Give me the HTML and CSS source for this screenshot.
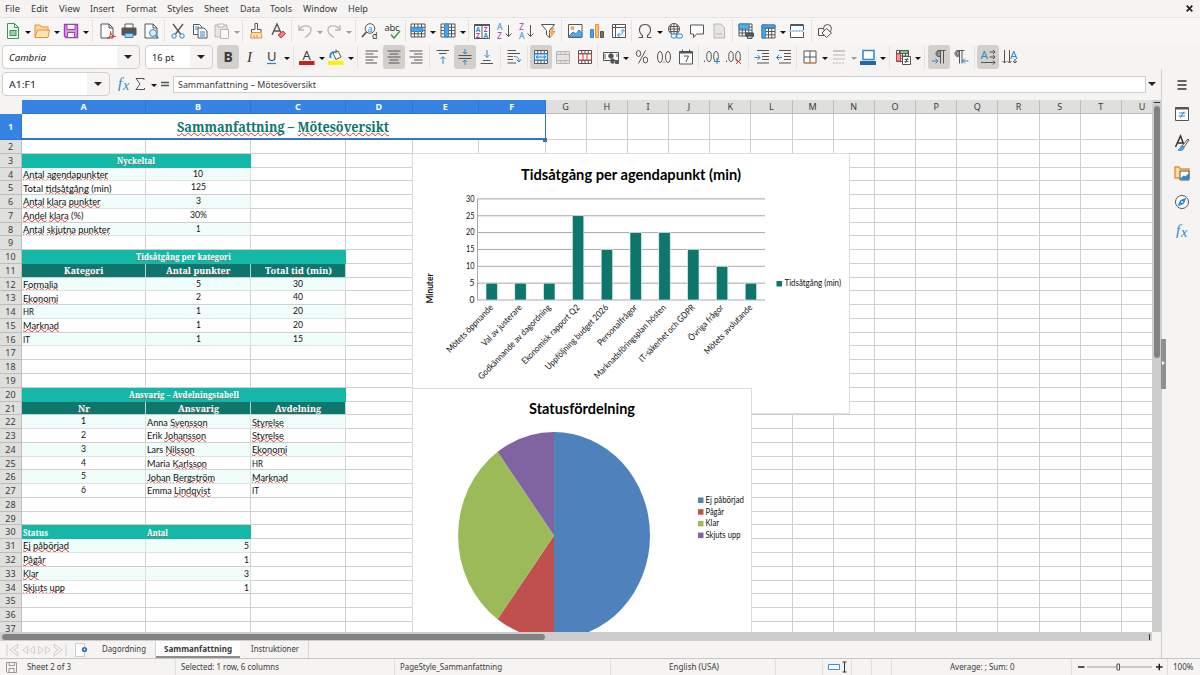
FILE: index.html
```html
<!DOCTYPE html>
<html lang="en" dir="ltr">
  <head>
    <meta charset="utf-8">
    <title>Sammanfattning – Mötesöversikt</title>
    <link rel="stylesheet" href="styles.css">
  </head>
  <body>
    <div id="menubar">
      <ul class="menu">
        <li data-w="15">File</li>
        <li data-w="17">Edit</li>
        <li data-w="21">View</li>
        <li data-w="24.5">Insert</li>
        <li data-w="30.5">Format</li>
        <li data-w="26.5">Styles</li>
        <li data-w="24.5">Sheet</li>
        <li data-w="20">Data</li>
        <li data-w="22">Tools</li>
        <li data-w="34">Window</li>
        <li data-w="20">Help</li>
      </ul>
      <svg class="close" viewBox="0 0 8 8"><path d="M1.5 1.5l5 5M6.5 1.5l-5 5"/></svg>
    </div>

    <div class="toolbar" id="standard"></div>

    <div class="toolbar" id="formatting">
      <div class="combo font"><span class="italic" data-w="37">Cambria</span><i class="arrow"></i></div>
      <div class="combo size"><span data-w="22">16 pt</span><i class="arrow"></i></div>
    </div>

    <div id="main">
      <div id="work">
        <div id="formula">
          <div class="combo name"><span data-w="27">A1:F1</span><i class="arrow"></i></div>
          <div class="fx" id="fxTools"></div>
          <div class="input"><span data-w="138">Sammanfattning – Mötesöversikt</span></div>
          <i class="arrow"></i>
        </div>
        <div id="view">
          <div id="sheet">
            <div id="cells"></div>
            <i class="handle"></i>
            <svg class="chart bars" viewBox="412 153 438 261">
              <text class="title" x="521" y="180" textLength="220" lengthAdjust="spacingAndGlyphs">Tidsåtgång per agendapunkt (min)</text>
              <g id="barPlot"></g>
              <text class="axis" transform="translate(432.5 303.5) rotate(-90)" textLength="30" lengthAdjust="spacingAndGlyphs">Minuter</text>
              <rect x="776.5" y="281" width="5.5" height="5.5" fill="#0f766e"/>
              <text x="784.5" y="286.2" textLength="56.5" lengthAdjust="spacingAndGlyphs">Tidsåtgång (min)</text>
            </svg>
            <svg class="chart pie" viewBox="412 388 340 260">
              <text class="title" x="529" y="414" textLength="106" lengthAdjust="spacingAndGlyphs">Statusfördelning</text>
              <path fill="#4f81bd" d="M554 535.5V432a96 103.5 0 0 1 0 207z"/>
              <path fill="#c0504d" d="M554 535.5V639a96 103.5 0 0 1-56.4-19.8z"/>
              <path fill="#9bbb59" d="M554 535.5L497.6 619.2a96 103.5 0 0 1 0-167.4z"/>
              <path fill="#8064a2" d="M554 535.5L497.6 451.8A96 103.5 0 0 1 554 432z"/>
              <g id="pieLegend"></g>
            </svg>
          </div>
          <div class="vscroll"><i></i></div>
        </div>
        <div class="hscroll"><i></i><b></b></div>
        <div id="tabs">
          <svg class="nav" viewBox="0 0 62 14">
            <path d="M1 1v12M12 1L4 7l8 6v-3.500L8 7l4-2.500zM22 3l-5 4 5 4zM29 3l-5 4 5 4zM33 3l5 4-5 4zM40 3l5 4-5 4zM49 1l8 6-8 6V9.500L53 7l-4-2.500zM61 1v12"/>
          </svg>
          <svg class="add" viewBox="0 0 16 16">
            <path d="M1.500 1.500h9v13h-9z" fill="#fff" stroke="#ccc"/>
            <circle cx="10.500" cy="7.500" r="2.600" fill="#2a6ab8"/><circle cx="10.500" cy="7.500" r=".900" fill="#fff"/>
          </svg>
          <ul class="tab">
            <li><span data-w="44">Dagordning</span></li>
            <li class="active"><span data-w="68">Sammanfattning</span></li>
            <li><span data-w="48">Instruktioner</span></li>
          </ul>
        </div>
      </div>
      <div id="sidebar"><i class="grip"></i></div>
    </div>

    <div id="status">
      <div class="s-save" id="saveState"></div>
      <div class="s-sheet"><span data-w="44">Sheet 2 of 3</span></div>
      <div class="s-sel"><span data-w="98">Selected: 1 row, 6 columns</span></div>
      <div class="s-style"><span data-w="102">PageStyle_Sammanfattning</span></div>
      <div class="s-lang"><span data-w="50">English (USA)</span></div>
      <div class="s-gap"></div>
      <div class="s-mode">
        <svg viewBox="0 0 24 14"><path d="M1.500 4.500h11v5h-11z" fill="#fff" stroke="#3c8fd0"/><path d="M15.500 2h4M15.500 12h4M17.500 2v10" stroke="#333" fill="none"/></svg>
      </div>
      <div class="s-a"></div>
      <div class="s-b"></div>
      <div class="s-sum"><span data-w="64.5">Average: ; Sum: 0</span></div>
      <div class="s-zoom">
        <svg viewBox="0 0 90 14"><path d="M2 7h6.500M80 7h6.500M83.250 3.800v6.400" stroke="#222" stroke-width="1.500"/><path d="M11 7h65" stroke="#999"/><path d="M41 4h2.500v6H41z" fill="#f5f4f2" stroke="#555"/></svg>
      </div>
      <div class="s-pct"><span data-w="20.5">100%</span></div>
    </div>

    <script src="script.js"></script>
  </body>
</html>
```
FILE: styles.css
```css
html,body,div,ul{
  margin:0;
  padding:0;
}
body{
  display:flex;
  flex-direction:column;
  width:1200px;
  height:675px;
  overflow:hidden;
  font-family:"Noto Sans","Open Sans",sans-serif;
  font-size:9px;
  color:#3a3a3a;
  background-color:#f5f4f2;
}
ul{
  list-style:none;
}
*{
  box-sizing:border-box;
}
svg{
  display:block;
  flex:none;
}
[data-w]{
  white-space:pre;
}
.fit{
  display:inline-block;
  transform-origin:0 50%;
  white-space:pre;
}

/* menu bar */
#menubar{
  display:flex;
  align-items:center;
  justify-content:space-between;
  flex:none;
  height:17px;
  padding:0 6px 0 5px;
}
.menu{
  display:flex;
  gap:10.800px;
  line-height:17px;
}
.close{
  width:9px;
  height:9px;
  stroke:#222;
  stroke-width:1.6;
}

/* toolbars */
.toolbar{
  display:flex;
  align-items:center;
  flex:none;
  height:27px;
  padding-left:1.500px;
}
#standard{
  border-top:1px solid #e6e5e3;
  background-color:#f7f6f5;
}
#formatting{
  height:26px;
  padding-left:2px;
}
.tool{
  display:flex;
  align-items:center;
  flex:none;
}
.tool svg{
  width:22px;
  height:22px;
  fill:none;
  stroke:#555;
  stroke-width:1;
}
.tool.drop{
  width:29.400px;
}
.tool.on svg{
  height:24px;
  border-radius:3px;
  background-color:#d3cfcb;
}
.tool.off{
  opacity:.38;
}
.tool text{
  stroke:none;
  fill:#3a3a3a;
  font-size:14px;
}
.sep{
  flex:none;
  display:flex;
  justify-content:center;
  height:22px;
}
.sep::before{
  content:"";
  width:1px;
  background-color:#e3e2e0;
}
.arrow{
  flex:none;
  width:0;
  height:0;
  border:4px solid transparent;
  border-top:4.500px solid #222;
  border-bottom:0;
}
.tool .arrow{
  margin:2px 0 0 1px;
  border-width:3px;
  border-top:3px solid #111;
  border-bottom:0;
}
.combo{
  display:flex;
  align-items:center;
  flex:none;
  height:24px;
  padding-left:6px;
  border:1px solid #d2cfcb;
  border-radius:4px;
  background:linear-gradient(90deg,#fff,#fff) no-repeat;
  color:#222;
  font-size:9.500px;
}
.combo span{
  flex:1;
}
.combo .arrow{
  margin-right:7px;
}
.combo.font{
  width:138px;
  margin-right:5px;
  background-size:114px 100%;
}
.combo.size{
  width:68px;
  margin-right:4px;
  background-size:44px 100%;
}
.combo.name{
  width:108px;
  background-size:84px 100%;
}
.italic{
  font-style:italic;
}

/* formula bar */
#main{
  display:flex;
  flex:1;
  min-height:0;
}
#work{
  display:flex;
  flex-direction:column;
  width:1161px;
}
#formula{
  display:flex;
  align-items:center;
  flex:none;
  height:30px;
  padding:0 0 2px 2px;
}
.fx{
  display:flex;
  width:63px;
  height:22px;
  padding-left:6px;
}
.fx .tool{
  width:16px;
}
.fx .tool.drop{
  width:25px;
}
.fx .tool svg{
  margin:0 -3px;
}
.fx .tool .arrow{
  margin-left:3px;
}
.input{
  width:973px;
  height:17px;
  margin-right:2px;
  padding-left:4px;
  border:1px solid #cfcdca;
  background-color:#fff;
  line-height:15px;
}

/* sheet */
#view{
  display:flex;
  flex:1;
  min-height:0;
}
#sheet{
  position:relative;
  width:1152px;
  overflow:hidden;
  background-color:#fff;
}
#cells{
  display:grid;
  grid-template-columns:22px 124px 105px 95px 66.500px 66.500px 66.500px repeat(15,41.180px);
  grid-template-rows:14px 26px repeat(35,13.770px);
}
.head{
  border-right:1px solid #bdbdbb;
  border-bottom:1px solid #bdbdbb;
  background-color:#dfdfde;
  font-size:9px;
  line-height:14.500px;
  text-align:center;
  overflow:hidden;
}
.head.sel{
  border-color:#2f76cc;
  background-color:#3584e4;
  color:#fff;
  font-weight:bold;
}
.head.corner{
  border-color:#f5f4f2;
  background-color:#f5f4f2;
}
.row1{
  line-height:26px;
}
.cell{
  display:flex;
  align-items:flex-end;
  min-width:0;
  border-right:1px solid #cfcfcf;
  border-bottom:1px solid #cfcfcf;
  padding:0 1px 0 .600px;
  overflow:hidden;
  font-family:Lato,sans-serif;
  font-size:9.600px;
  line-height:10.500px;
  color:#111;
}
.cell.center{
  justify-content:center;
  padding:0;
}
.cell.num{
  align-items:flex-start;
  line-height:12.500px;
}
.cell.right{
  justify-content:flex-end;
}
.cell.light{
  border-color:#d9e5e3;
  background-color:#f0fdfa;
}
.cell.teal,.cell.dark{
  font-family:"Noto Serif","DejaVu Serif Condensed","DejaVu Serif",serif;
  font-size:9.300px;
  font-weight:bold;
  line-height:11.500px;
  color:#fff;
}
.cell.teal{
  border-color:#14b8a6;
  background-color:#14b8a6;
}
.cell.dark{
  border-color:#b9d6d3;
  background-color:#0f766e;
}
.cell.big{
  align-items:center;
  border:0;
  border-right:1px solid #3476c4;
  border-bottom:2px solid #3476c4;
  font-family:"Noto Serif","DejaVu Serif Condensed","DejaVu Serif",serif;
  font-size:14px;
  font-weight:bold;
  line-height:24px;
  padding-top:2px;
  color:#0f766e;
}
.cell u{
  text-decoration:underline wavy #e0332c .900px;
  text-decoration-skip-ink:none;
  text-underline-offset:-1px;
}
.cell.big u{
  text-underline-offset:0;
}
.cell.teal u,.cell.dark u{
  text-decoration-color:#e0332c;
  text-underline-offset:-2.500px;
}
.handle{
  position:absolute;
  left:543px;
  top:38px;
  width:4px;
  height:4px;
  background-color:#3476c4;
}

/* charts float over the cells */
.chart{
  position:absolute;
  left:412px;
  outline:1px solid #dcdcdc;
  outline-offset:-1px;
  background-color:#fff;
  font-family:Lato,sans-serif;
  font-size:9px;
  fill:#111;
}
.chart.bars{
  top:53px;
  width:438px;
  height:261px;
}
.chart.pie{
  top:288px;
  width:340px;
  height:260px;
}
.chart .title{
  font-size:15.500px;
  font-weight:bold;
  fill:#000;
}
.chart .axis{
  font-size:8.500px;
  font-weight:bold;
}

/* scroll bars */
.vscroll{
  width:9px;
  padding:1.500px 1.500px 0;
  background-color:#cdcdcd;
}
.vscroll::before{
  content:"";
  display:block;
  height:1px;
  background-color:#333;
}
.vscroll i{
  display:block;
  width:6px;
  height:252px;
  margin-top:3px;
  border-radius:3px;
  background-color:#808381;
}
.hscroll{
  display:flex;
  justify-content:space-between;
  align-items:center;
  flex:none;
  width:1152px;
  height:9px;
  padding:0 2px;
  background-color:#cdcdcd;
}
.hscroll i{
  width:543px;
  height:6px;
  border-radius:3px;
  background-color:#808381;
}
.hscroll b{
  width:1px;
  height:6px;
  background-color:#333;
}

/* sheet tabs */
#tabs{
  display:flex;
  flex:none;
  height:17px;
  padding-left:6px;
}
.nav{
  width:61px;
  height:14px;
  margin-top:2px;
  fill:none;
  stroke:#cfcecb;
}
.add{
  width:16px;
  height:16px;
  margin:1px 6px 0 7px;
}
.tab{
  display:flex;
  line-height:16px;
}
.tab li{
  padding:0 9.500px 0 5.800px;
  border-right:1px solid #d5d3d0;
}
.tab li.active{
  padding:0 8px;
  border-right:0;
  border-bottom:2px solid #8b8e8f;
  background-color:#fff;
  font-weight:bold;
}
.tab li:last-child{
  padding-left:10.500px;
}

/* side bar */
#sidebar{
  position:relative;
  display:flex;
  flex-direction:column;
  align-items:center;
  gap:7.200px;
  width:39px;
  padding:4px 0 0 1px;
  border-left:1px solid #cfcdca;
}
.grip{
  position:absolute;
  left:-1px;
  top:269px;
  width:5px;
  height:50px;
  background-color:#8e918f;
}
.grip::after{
  content:"";
  display:block;
  margin:22px 0 0 1px;
  border:2.500px solid transparent;
  border-left:3px solid #fff;
  border-right:0;
}

/* status bar */
#status{
  display:flex;
  flex:none;
  height:17px;
  border-top:1px solid #c9c7c4;
  font-size:8.800px;
  line-height:16px;
}
#status > div{
  border-right:1px solid #e0dfdc;
}
#status svg{
  height:14px;
  margin-top:1px;
}
#status .s-save{
  width:27px;
  padding-left:1px;
  border:0;
}
#status .s-save svg{
  height:22px;
  margin-top:-3px;
}
.s-sheet{
  width:149px;
}
.s-sel{
  width:219px;
  padding-left:5px;
}
.s-style{
  width:216px;
  padding-left:5px;
}
.s-lang{
  width:165px;
  padding-left:58px;
}
.s-gap{
  width:47px;
}
.s-mode{
  width:29px;
  padding-left:4px;
}
.s-mode svg{
  width:24px;
}
.s-a{
  width:20px;
}
.s-b{
  width:20px;
}
.s-sum{
  width:180px;
  padding-left:58px;
}
.s-zoom{
  width:96px;
  padding-left:4px;
}
.s-zoom svg{
  width:90px;
}
#status .s-pct{
  padding-left:5px;
  border:0;
}
```
FILE: script.js
```javascript
~function(){
  // icons on a 22x22 canvas
  const B = '#2f87cf', O = '#e69138', P = '#a33fb5', R = '#d33a3a', G = '#3a9a55';
  const doc = 'M5 4h8l4 4v10H5z';
  const lines = list => `<path d="${list.map(l => `M${l[0]} ${l[2]}H${l[1]}`).join('')}"/>`;
  const table = (x, y, w, h) => `<path fill="#fff" d="M${x} ${y}h${w}v${h}h-${w}zM${x} ${y+h/4}h${w}M${x} ${y+h/2}h${w}M${x} ${y+h*3/4}h${w}M${x+w/4} ${y}v${h}M${x+w/2} ${y}v${h}M${x+w*3/4} ${y}v${h}"/>`;
  const icons = {
    new: `<path d="M5.500 3.500h7l4 4v11h-11z" fill="#eefaf0" stroke="${G}"/><path d="M12.500 3.500v4h4" stroke="${G}"/><path d="M7.500 10h7v6h-7z" fill="${G}" stroke="none"/><path d="M8.500 12h5M8.500 14h5" stroke="#fff"/>`,
    open: `<path d="M4 17V5h5l2 2h6v3" fill="#fbd9a4" stroke="${O}"/><path d="M4 17.500L6.500 10h12L17 17.500z" fill="#fde3b8" stroke="${O}"/>`,
    save: `<path d="M4.500 4.500h13v13H6l-1.500-1.500z" fill="#d59be0" stroke="${P}" stroke-width="1.400"/><path d="M7 4.500h8v5H7zM7.500 12.500h7v5h-7z" fill="#fff" stroke="${P}"/>`,
    saveState: `<path d="M5.500 6.500h10v10h-9l-1-1zM8 6.500h5.500v3H8zM8 12.500h5v4H8z" stroke="#999"/>`,
    pdf: `<path d="${doc}M13 4v4h4" fill="#fff"/><path d="M11 18.500c3-1 4-4 3.500-7 0 3 2 5 5 5-3-.5-6 .5-8.500 2" stroke="${R}"/>`,
    print: `<path d="M7 8V4h8v4" fill="#fff"/><path d="M4 8h14v7H4z" fill="#555"/><path d="M7 13.500h8v4H7z" fill="#9fd0f3" stroke="${B}"/>`,
    preview: `<path d="${doc}M13 4v4h4" fill="#fff"/><circle cx="13" cy="13" r="3.500" fill="#d6ecfb" stroke="${B}"/><path d="M15.500 15.500l3 3" stroke="${B}" stroke-width="1.500"/>`,
    cut: `<path d="M6 4l7.500 10M16 4L8.500 14" stroke-width="1.300"/><circle cx="7" cy="16" r="2.200" stroke="${B}"/><circle cx="15" cy="16" r="2.200" stroke="${B}"/>`,
    copy: `<path d="M4.500 4.500h6l2 2v8h-8z" fill="#fff"/><path d="M9 8h6l3 3v7H9z" fill="#fff"/><path d="M6 7h4M6 9h3M11 12h5M11 14h5M11 16h5" stroke="${B}"/>`,
    paste: `<path d="M4 5h12v12H4z" fill="#ccc"/><path d="M7 4h6v3H7zM9.500 9.500h8v9h-8z" fill="#fff"/>`,
    clone: `<path d="M10 3.500h2.500v6H16v3H6.500v-3H10z" fill="#fff"/><path d="M6.500 12.500h9.500l1 5.500H5.500z" fill="#fde3b8" stroke="${O}"/><path d="M9 15v3M12 15v3" stroke="${O}"/>`,
    clear: `<path d="M5 15L10 4l4 9M7 11h6" stroke-width="1.400"/><path d="M11 15l5-4 2.500 2.500-4.500 4.500z" fill="#ee7d7d" stroke="${R}"/>`,
    undo: `<path d="M5 5v5h5M5.500 9.500C8 5 16 4.500 17 9c.5 3-2 6-6 8.500" stroke-width="1.300"/>`,
    redo: `<path d="M17 5v5h-5M16.500 9.500C14 5 6 4.500 5 9c-.5 3 2 6 6 8.500" stroke-width="1.300"/>`,
    find: `<circle cx="11" cy="8.500" r="4.800" fill="#fff"/><path d="M7.500 12L3 17" stroke-width="1.800"/><text x="8.500" y="11.500" style="font-size:9px;fill:${B}">a</text><text x="13" y="19" style="font-size:9px">d</text>`,
    spell: `<text x="3.500" y="10.500" textLength="15" style="font-size:9.500px">abc</text><path d="M10 14.500l3 3.500 6-7" stroke="${G}" stroke-width="1.500"/>`,
    row: `${table(4,4,14,13)}<path d="M4 7.500h12v4H4z" fill="#4aa3e3" stroke="${B}"/>`,
    col: `${table(4,4,14,13)}<path d="M7.500 4h4v13h-4z" fill="#4aa3e3" stroke="${B}"/>`,
    sort: `<path d="M3.500 4.500h15v14h-15zM11 4.500v14" fill="#fff"/><path d="M3.500 5h15" stroke-width="2"/><text x="4.800" y="12" style="font-size:6.500px;font-weight:bold;fill:${B}">A</text><text x="5" y="18" style="font-size:6.500px;font-weight:bold;fill:${P}">Z</text><text x="12.700" y="12" style="font-size:6.500px;font-weight:bold;fill:${P}">Z</text><text x="12.400" y="18" style="font-size:6.500px;font-weight:bold;fill:${B}">A</text>`,
    asc: `<text x="4" y="10" style="font-size:8.500px;fill:${B}">A</text><text x="4" y="18.500" style="font-size:8.500px;fill:${P}">Z</text><path d="M15.500 5v11M12.500 13.500l3 3 3-3"/>`,
    desc: `<text x="4" y="10" style="font-size:8.500px;fill:${P}">Z</text><text x="4" y="18.500" style="font-size:8.500px;fill:${B}">A</text><path d="M15.500 5v11M12.500 13.500l3 3 3-3"/>`,
    filter: `<path d="M4.500 4.500h13l-5 6v7l-3-2.500v-4.500z" fill="#fff"/><path d="M15.500 8l-3.500 5h3l-1.500 4.500 4.500-6h-3l2-3.500z" fill="#fbc26b" stroke="${O}" stroke-width=".800"/>`,
    image: `<path d="M4.500 4.500h13.500v13H4.500z" fill="#fff"/><path d="M5 16l4-4 3 2 3-4 3 3v4H5z" fill="#5baae3" stroke="${B}"/><circle cx="8.500" cy="8" r="1.500" fill="#fbc26b" stroke="${O}"/>`,
    chart: `<path d="M4.500 9.500h3v8h-3z" fill="#4aa3e3" stroke="${B}"/><path d="M9.500 4.500h3v13h-3z" fill="#fbc26b" stroke="${O}"/><path d="M14.500 11.500h3v6h-3z" fill="#777"/>`,
    pivot: `<path d="M4.500 4.500h13v13h-13zM4.500 7.500h13M7.500 4.500v13" fill="#fff"/><path d="M10 15c4 0 5-2 5-5M13 11.500l2-2 2 2M11.500 13l-2 2 2 2" stroke="${B}"/>`,
    omega: `<path d="M4.500 17.500h4v-2c-5-4-3.500-11 2.500-11s7.500 7 2.500 11v2h4" stroke-width="1.200"/>`,
    link: `<circle cx="10" cy="9" r="5.500" fill="#fff"/><path d="M4.500 9h11M10 3.500v11M7.500 4.500c-1.500 3-1.500 6 0 9M12.500 4.500c1.500 3 1.500 6 0 9M5.500 6.500h9M5.500 11.500h9"/><rect x="7" y="14" width="6" height="4" rx="2" fill="#fff" stroke="${B}"/><rect x="12" y="14" width="6.500" height="4" rx="2" stroke="${B}"/>`,
    note: `<path d="M4.500 5h13v9h-7L7.500 17.500V14h-3z" fill="#fff"/>`,
    headfoot: `<path d="M6 4h7l3.500 3.500v10.500H6z" fill="#ccc"/><path d="M8 14h6"/>`,
    area: `${table(4,4,13,12)}<path d="M4 4h10v5H4z" fill="#5baae3" stroke="${B}"/><path d="M11 13h7.500v3.500H11z" fill="#555"/><path d="M12.500 16h4.500v2.500h-4.500z" fill="#9fd0f3"/>`,
    freeze: `${table(5,5,13,13)}<path d="M5 5h3.500v13H5z" fill="#4aa3e3" stroke="${B}"/><path d="M5 5h13v2.500H5z" fill="#4aa3e3" stroke="${B}"/>`,
    split: `<path d="M4.500 10V5h13v5M4.500 12v5.500h13V12" fill="#fff"/><path d="M4.500 5h13" stroke-width="2"/><path d="M3.500 11h15" stroke="${B}" stroke-dasharray="2 1"/>`,
    shapes: `<path d="M4.500 8.500h8v7h-8z"/><circle cx="13.500" cy="8.500" r="4" fill="#f7f6f5"/><path d="M12.500 8.500l5 4.500-5 4.500-4.500-4.500z" fill="#f7f6f5"/>`,
    bold: `<text x="6.500" y="16" font-weight="bold">B</text>`,
    italic: `<text x="8" y="16" font-style="italic" font-family="Liberation Serif" style="font-size:15px">I</text>`,
    under: `<text x="6" y="15" style="font-size:13px">U</text><path d="M6 17.500h9" stroke="${B}" stroke-width="1.300"/>`,
    color: `<text x="6.500" y="14" style="font-size:13px">A</text><path d="M3 17h15.500" stroke="#c5221f" stroke-width="4"/>`,
    fill: `<path d="M3 17h15.500" stroke="#fff200" stroke-width="4"/><path d="M8 7l5-2 3 6-5 2.500zM11 3.500v4" fill="#fff"/><path d="M5.500 12c-1-4 1-6 4-6" stroke="${B}" stroke-width="2"/>`,
    left: lines([[4.500,17,5],[4.500,12.500,8],[4.500,17,11],[4.500,12.500,14],[4.500,16,17]]),
    center: lines([[4.500,17.500,5],[6.500,15.500,8],[4.500,17.500,11],[6.500,15.500,14],[5.500,16.500,17]]),
    right: lines([[4.500,17.500,5],[9,17.500,8],[4.500,17.500,11],[9,17.500,14],[6,17.500,17]]),
    top: lines([[4.500,17,4.500],[7,14.500,7.500]]) + `<path d="M11 18v-7M8.500 13l2.500-2.500 2.500 2.500" stroke="${B}"/>`,
    middle: lines([[4.500,17.500,9.500],[4.500,17.500,12.500]]) + `<path d="M11 3v5M9 6l2 2 2-2M11 19v-5M9 16l2-2 2 2" stroke="${B}"/>`,
    bottom: lines([[4.500,17,17.500],[7,14.500,14.500]]) + `<path d="M11 4v7M8.500 9l2.500 2.500L13.500 9" stroke="${B}"/>`,
    wrap: lines([[4.500,13,4.500],[4.500,17,7.500],[4.500,10,10.500],[4.500,10,13.500],[4.500,13,17]]) + `<path d="M11 10.500c4 0 5 2 5 5M13.500 13.500l2.500 2.500 2-2.500" stroke="${B}"/>`,
    merge: `${table(4.500,4.500,13,13)}<path d="M4.500 8h13v6h-13z" fill="#d6ecfb" stroke="${B}"/><path d="M6 11h10M8 9.500L6 11l2 1.500M14 9.500l2 1.500-2 1.500" stroke="${B}"/>`,
    mergeOff: `<path d="M4.500 5.500h13v12h-13zM4.500 8.500h13M4.500 14.500h13M9 5.500v3M13 5.500v3M9 14.500v3M13 14.500v3" fill="#ccc"/>`,
    unmerge: `${table(4.500,4.500,13,13)}<path d="M4.500 8h13v6h-13zM9 8v6M13 8v6" fill="#fff" stroke="${R}"/>`,
    money: `<path d="M3.500 6.500h15v8h-15z" fill="#fff"/><circle cx="11" cy="10" r="2.300" fill="#555"/><path d="M5 8v5M17 8v3M11 13h3v4h-3zM15.500 14.500h3v3h-3z" fill="#555"/>`,
    percent: `<ellipse cx="7.500" cy="7.500" rx="2.200" ry="3"/><ellipse cx="14.500" cy="14" rx="2.200" ry="3"/><path d="M14.500 4.500l-7 13"/>`,
    number: `<ellipse cx="7" cy="11" rx="2.500" ry="5.500"/><ellipse cx="15" cy="11" rx="2.500" ry="5.500"/><path d="M11 15.500v1.500"/>`,
    date: `<path d="M4.500 5.500h13v12.500H4.500zM7.500 3.500v2M14.500 3.500v2" fill="#fff"/><path d="M4.500 6.500h13" stroke-width="2"/><path d="M9 10h4.500l-2.500 6"/>`,
    decAdd: `<ellipse cx="8" cy="10.500" rx="2.300" ry="5"/><ellipse cx="15" cy="10.500" rx="2.300" ry="5"/><path d="M3.500 14.500v1.500"/><path d="M16 12v6M13 15.500h6" stroke="${B}"/>`,
    decDel: `<ellipse cx="8" cy="10.500" rx="2.300" ry="5"/><ellipse cx="15" cy="10.500" rx="2.300" ry="5"/><path d="M3.500 14.500v1.500"/><path d="M13 13l5 5M18 13l-5 5" stroke="${R}"/>`,
    indent: lines([[6,18,4.500],[11,18,7.500],[11,18,10.500],[11,18,13.500],[6,18,17]]) + `<path d="M3.500 11.500h5.500M6.500 9l2.500 2.500L6.500 14" stroke="${B}"/>`,
    outdent: lines([[6,18,4.500],[11,18,7.500],[11,18,10.500],[11,18,13.500],[6,18,17]]) + `<path d="M3.500 11.500H9M6 9l-2.500 2.500L6 14" stroke="${B}"/>`,
    border: `<path d="M5 5h12v12H5zM11 5v12M5 11h12" fill="#fff"/><path d="M5 17h12" stroke="${O}"/>`,
    lineStyle: `<path d="M5 5h12" stroke-width="1.500"/><path d="M5 9h12M5 13h12"/><path d="M5 17h12" stroke-dasharray="2 1"/>`,
    lineColor: `<path d="M6 4.500h11v9H6z" fill="#fff" stroke="${B}" stroke-width="1.500"/><path d="M3 17h16" stroke="#2566a8" stroke-width="4"/>`,
    cond: `${table(4.500,4.500,12,11)}<path d="M8 4.500h8v3H8z" fill="#7fd08a"/><path d="M4.500 8h4v7h-4z" fill="#f3a0a0" stroke="${R}"/><path d="M10.500 10.500h8v8h-8zM12.500 13.500h4M12.500 15.500h4M15.500 12l-2 5" fill="#fff"/>`,
    ltr: `<path d="M17.500 4.500H11c-4 0-4 6 0 6M12.500 4.500v13M15.500 4.500v13"/><path d="M11 5h1.500v5.500H11c-3-.5-3-5 0-5.500z" fill="#999"/><path d="M4 15h6M7.500 12.500L10 15l-2.500 2.500" stroke="${B}"/>`,
    rtl: `<path d="M14.500 4.500H8c-4 0-4 6 0 6M9.500 4.500v13M12 4.500v13"/><path d="M8 5h1.500v5H8c-2.500-.5-2.500-4.500 0-5z" fill="#999"/><path d="M12.500 15h6M15 12.500L12.500 15l2.500 2.500" stroke="${B}"/>`,
    horiz: `<text x="3.500" y="13" style="font-size:11.500px;fill:${B}">A</text><path d="M12.500 6h5.500M16 4l2 2-2 2M12.500 11h5.500M16 9l2 2-2 2M4 16.500h14M16 14.500l2 2-2 2"/>`,
    vert: `<text x="11" y="13" style="font-size:11.500px;fill:${B}">A</text><path d="M5.500 4v13M3.500 15l2 2 2-2M10.500 4v13M8.500 15l2 2 2-2M16 13v4M14 15l2 2 2-2"/>`,
    fx: `<text x="5" y="15" font-family="Liberation Serif" font-style="italic" style="font-size:15px;fill:${B}">f</text><text x="10" y="17" font-family="Liberation Serif" font-style="italic" style="font-size:14px;fill:${B}">x</text>`,
    sum: `<path d="M15 7V5.500H7l4 5.500-4 5.500h8.500V15"/>`,
    equal: `<path d="M7 9.500h8M7 12.500h8" stroke-width="1.500"/>`,
    menu: `<path d="M6.500 7h9M6.500 11h9M6.500 15h9" stroke="#333" stroke-width="1.500"/>`,
    props: `<path d="M4.500 4.500h13v13h-13z" fill="#fff"/><path d="M4.500 5.500h13" stroke-width="2"/><path d="M8 10h6.500M7.500 13h6.500M13 8.500L9.500 14.500" stroke="${B}"/>`,
    styles: `<path d="M4.500 15L9.500 4l3.500 9M6.500 11h6" stroke-width="1.500" stroke="#333"/><path d="M18 8l-5 7-2-1 6-7z" fill="#fff"/><path d="M7 18c3 1 6 0 6-3l-2-1c-2 0-1 3-4 4z" fill="#5baae3" stroke="${B}"/>`,
    gallery: `<path d="M4 16V5h4l1.500 2H18v9z" fill="#fbd9a4" stroke="${O}" stroke-width="1.400"/><path d="M9 9h9v9H9z" fill="#fff"/><path d="M9.500 17l3-3 2 1 3-3v5.500z" fill="${B}" stroke="${B}"/>`,
    nav: `<circle cx="11" cy="11" r="6.500" fill="#fff"/><path d="M14.500 7.500l-2 5-5 2 2-5z" fill="${B}" stroke="${B}"/><circle cx="11" cy="11" r="1" fill="#fff" stroke="none"/>`
  };

  // name, name> with drop-down, *name pressed, -name disabled, number = separator, [n] = blank gap
  function addTools(box, list){
    list.forEach(item => {
      const el = document.createElement('div');
      if(typeof item === 'number' || Array.isArray(item)){
        el.className = Array.isArray(item) ? 'gap' : 'sep';
        el.style.width = item + 'px';
      }else{
        const name = item.replace(/[*>-]/g, '');
        el.className = 'tool' + (item.includes('>') ? ' drop' : '') + (item[0] === '*' ? ' on' : '') + (item[0] === '-' ? ' off' : '');
        el.innerHTML = `<svg viewBox="0 0 22 22">${icons[name]}</svg>` + (item.includes('>') ? '<i class="arrow"></i>' : '');
      }
      box.appendChild(el);
    });
  }
  const byId = id => document.getElementById(id);

  addTools(byId('standard'), ['new>','open>','save>',6.5,'pdf','print','preview',4.5,'cut','copy','-paste>',5,'clone','clear',4.5,
    '-undo>','-redo>',7,'find','spell',4,'row>','col>',4.5,'sort','asc','desc','filter',5,'image','chart','pivot',4,'omega>',
    [1],'link','note','-headfoot',5,'area','freeze>','split',5.5,'shapes']);
  addTools(byId('formatting'), ['*bold','italic','under>',5.5,'color>','fill>',6,'left','*center','right',5,'top','*middle','bottom',5.5,
    'wrap',4.5,'*merge','-mergeOff','unmerge',4.5,'money>',[1],'percent','number','date',4.5,'decAdd','decDel',6,'indent','outdent',3.5,
    'border>','-lineStyle>','lineColor>',5,'cond>',6.5,'*ltr','rtl',5.5,'*horiz','vert']);
  addTools(byId('fxTools'), ['fx','sum>','equal']);
  addTools(byId('sidebar'), ['menu','props','styles','gallery','nav','fx']);
  addTools(byId('saveState'), ['saveState']);

  // sheet: ref -> [text, width, classes, span]; ~word~ is underlined by the spell checker
  const data = {
    A1: ['~Sammanfattning~ – ~Mötesöversikt~', 212, 'big center', 6],
    A3: ['~Nyckeltal~', 38, 'teal center', 2],
    A10: ['~Tidsåtgång~ per ~kategori~', 95, 'teal center', 3],
    A11: ['~Kategori~', 39.5, 'dark center'], B11: ['~Antal~ ~punkter~', 64.5, 'dark center'], C11: ['Total ~tid~ (min)', 67, 'dark center'],
    A20: ['~Ansvarig~ – ~Avdelningstabell~', 110, 'teal center', 3],
    A21: ['~Nr~', 12, 'dark center'], B21: ['~Ansvarig~', 41, 'dark center'], C21: ['~Avdelning~', 46, 'dark center'],
    A30: ['Status', 25, 'teal'], B30: ['~Antal~', 21, 'teal']
  };
  const put = (col, row, text, w, cls) => {
    data[col + row] = [text, w, cls];
  };
  [['~Antal~ ~agendapunkter~',85,'10',10],['Total ~tidsåtgång~ (min)',88.5,'125',15],['~Antal~ ~klara~ ~punkter~',77.5,'3',5],
   ['~Andel~ ~klara~ (%)',60.5,'30%',17],['~Antal~ ~skjutna~ ~punkter~',87,'1',4.5]].forEach((r, i) => {
    const bg = i % 2 ? '' : 'light ';
    put('A', i+4, r[0], r[1], bg);
    put('B', i+4, r[2], r[3], bg + 'center num');
  });
  [['~Formalia~',35,5,30],['~Ekonomi~',35.3,2,40],['HR',11,1,20],['~Marknad~',36,1,20],['IT',7,1,15]].forEach((r, i) => {
    const bg = i % 2 ? '' : 'light ';
    put('A', i+12, r[0], r[1], bg);
    put('B', i+12, r[2], 5, bg + 'center num');
    put('C', i+12, r[3], 10, bg + 'center num');
  });
  [['Anna ~Svensson~',60.5,'~Styrelse~',32],['Erik ~Johansson~',59,'~Styrelse~',32],['Lars ~Nilsson~',47.5,'~Ekonomi~',35.3],
   ['Maria ~Karlsson~',60,'HR',11],['~Johan~ ~Bergström~',68,'~Marknad~',36],['Emma ~Lindqvist~',63.5,'IT',7]].forEach((r, i) => {
    const bg = i % 2 ? '' : 'light ';
    put('A', i+22, i+1, 5, bg + 'center num');
    put('B', i+22, r[0], r[1], bg);
    put('C', i+22, r[2], r[3], bg);
  });
  [['~Ej~ ~påbörjad~',46,5],['~Pågår~',22.5,1],['~Klar~',15.5,3],['~Skjuts~ ~upp~',42,1]].forEach((r, i) => {
    const bg = i % 2 ? '' : 'light ';
    put('A', i+31, r[0], r[1], bg);
    put('B', i+31, r[2], 5, bg + 'right');
  });

  const cols = 'ABCDEFGHIJKLMNOPQRSTU'.split('');
  let html = '<div class="head corner"></div>' + cols.map((c, i) => `<div class="head${i < 6 ? ' sel' : ''}">${c}</div>`).join('');
  for(let r = 1; r <= 37; r++){
    html += `<div class="head${r === 1 ? ' sel row1' : ''}">${r}</div>`;
    for(let i = 0; i < cols.length; i++){
      const d = data[cols[i] + r];
      if(!d){
        html += '<div class="cell"></div>';
        continue;
      }
      const text = String(d[0]).replace(/~(.+?)~/g, '<u>$1</u>');
      const span = d[3] || 1;
      html += `<div class="cell ${d[2]}" style="grid-column:span ${span}"><span data-w="${d[1]}">${text}</span></div>`;
      i += span - 1;
    }
  }
  byId('cells').innerHTML = html;

  // squeeze each label to its own width
  document.querySelectorAll('[data-w]').forEach(el => {
    const w = +el.dataset.w;
    el.innerHTML = `<span class="fit">${el.innerHTML}</span>`;
    const fit = el.firstChild, natural = fit.getBoundingClientRect().width;
    fit.style.transform = `scaleX(${w / natural})`;
    fit.style.marginRight = (w - natural) + 'px';
  });

  // bar chart
  const bars = [['Mötets öppnande',5,63],['Val av justerare',5,54],['Godkännande av dagordning',5,100],['Ekonomisk rapport Q2',25,79],
    ['Uppföljning budget 2026',15,86.5],['Personalfrågor',20,53],['Marknadsföringsplan hösten',20,99],['IT-säkerhet och GDPR',15,76],
    ['Övriga frågor',10,46.5],['Mötets avslutande',5,65]];
  let plot = '';
  for(let v = 0; v <= 30; v += 5){
    const y = 300 - v * 3.37;
    plot += `<path d="M477 ${y}H765" stroke="#a9a9a9"/><text x="474.500" y="${y + 2.8}" text-anchor="end" font-size="8.500" ${v > 5 ? 'textLength="8.500" lengthAdjust="spacingAndGlyphs"' : ''}>${v}</text>`;
  }
  plot += '<path d="M477.500 199V300" stroke="#a9a9a9"/>';
  bars.forEach((b, i) => {
    const x = 491.7 + i * 28.8, h = b[1] * 3.37;
    plot += `<rect x="${x - 5.7}" y="${300 - h}" width="11.400" height="${h}" fill="#0f766e" stroke="#e6f3f1" stroke-width=".600"/>`;
    plot += `<text transform="translate(${x + 2} 308) rotate(-46)" text-anchor="end" font-size="8.800" textLength="${b[2]}" lengthAdjust="spacingAndGlyphs">${b[0]}</text>`;
  });
  byId('barPlot').innerHTML = plot;

  byId('pieLegend').innerHTML = [['Ej påbörjad','#4f81bd',38.5],['Pågår','#c0504d',18.5],['Klar','#9bbb59',13.5],['Skjuts upp','#8064a2',35]].map((l, i) => {
    const y = 497.5 + i * 11.7;
    return `<rect x="698" y="${y}" width="5.500" height="5.500" fill="${l[1]}"/><text x="705.500" y="${y + 5.5}" textLength="${l[2]}" lengthAdjust="spacingAndGlyphs">${l[0]}</text>`;
  }).join('');
}()
```
